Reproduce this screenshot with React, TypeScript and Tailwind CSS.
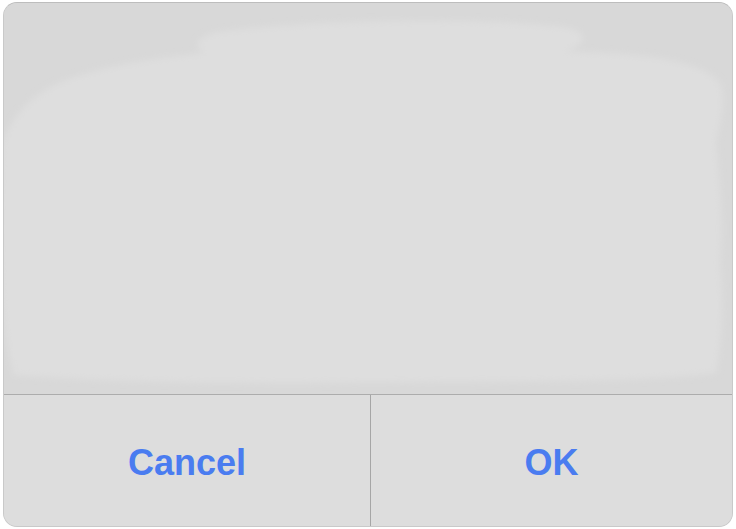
import React from "react";

export default function App() {
  return (
    <div className="w-[736px] h-[529px] bg-white pt-[2px] pl-[3px]" style={{ fontFamily: '"Liberation Sans", Arial, sans-serif' }}>
      <div className="w-[730px] h-[525px] rounded-[14px] bg-[#d9d9d9] border border-[#c9c9c9] border-t-[#bdbdbd] overflow-hidden flex flex-col">
        <div className="relative flex-1 bg-[#d8d8d8]">
          <svg className="absolute inset-0" width="730" height="392" viewBox="0 0 730 392">
            <defs>
              <filter id="b" x="-10%" y="-10%" width="120%" height="120%">
                <feGaussianBlur stdDeviation="3" />
              </filter>
            </defs>
            <path
              d="M210 30 C300 16 480 14 560 24 C590 30 580 44 560 48 L600 50 C650 52 700 60 716 80 C722 100 716 120 712 140 C716 180 720 220 716 260 C720 300 718 340 712 370 C640 380 480 378 300 380 C200 380 80 378 10 372 C-2 330 -4 280 -4 240 C-4 200 -4 170 -2 140 C10 110 30 90 60 78 C90 66 140 56 200 50 C190 44 190 36 210 30 Z"
              fill="#dedede"
              filter="url(#b)"
            />
          </svg>
        </div>
        <div className="h-px bg-[#acacac]" />
        <div className="h-[131px] flex bg-[#dddddd]">
          <div className="w-[366px] flex items-center justify-center pt-[5px]">
            <span className="text-[#4a7cf0] text-[36px] font-bold leading-none">Cancel</span>
          </div>
          <div className="w-px bg-[#a6a6a6]" />
          <div className="flex-1 flex items-center justify-center pt-[5px]">
            <span className="text-[#4a7cf0] text-[36px] font-bold leading-none">OK</span>
          </div>
        </div>
      </div>
    </div>
  );
}
